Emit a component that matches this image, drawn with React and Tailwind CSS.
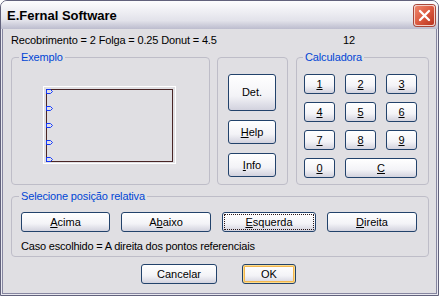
import React from "react";

const Btn = ({ children, className = "", extra = "" }) => (
  <div
    className={`flex items-center justify-center rounded-[3px] border border-[#22426b] bg-linear-to-b from-white via-[#f3f3f7] via-60% to-[#d2d2de] text-[11px] leading-none text-black ${className} ${extra}`}
  >
    {children}
  </div>
);

const Legend = ({ children, ml = "ml-[7px]" }) => (
  <legend className={`${ml} px-[2px] text-[11px] leading-[13px] tracking-[-0.15px] text-[#0046d5]`}>{children}</legend>
);

function Drawing() {
  const ys = [3, 20, 37, 54, 71];
  return (
    <svg width="134" height="79" viewBox="0 0 134 79" className="block">
      <rect x="0.5" y="0.5" width="132" height="77" fill="none" stroke="#ffffff" strokeWidth="1" />
      <rect x="3.5" y="3.5" width="126" height="72" fill="none" stroke="#4a2626" strokeWidth="1" />
      {ys.map((y) => (
        <polyline
          key={y}
          points={`3.5,${y + 0.5} 7.5,${y + 0.5} 9.5,${y + 2.5} 7.5,${y + 4.5} 3.5,${y + 4.5} 3.5,${y + 0.5}`}
          fill="none"
          stroke="#1238ff"
          strokeWidth="1"
        />
      ))}
    </svg>
  );
}

function CloseBtn() {
  return (
    <div className="mt-[4px] flex h-[21px] w-[21px] items-center justify-center rounded-[3px] border border-[#f4d0c8] bg-linear-to-br from-[#ee866c] via-[#dc5a40] to-[#b8321e] shadow-[0_0_0_1px_#a8473a]">
      <svg width="13" height="13" viewBox="0 0 13 13">
        <path d="M2 2 L11 11 M11 2 L2 11" stroke="white" strokeWidth="2.3" strokeLinecap="round" />
      </svg>
    </div>
  );
}

export default function App() {
  return (
    <div className="flex h-[296px] w-[439px] flex-col overflow-hidden rounded-t-[7px] border border-[#62627c] bg-[#e8e8f0] font-['Liberation_Sans',Arial,sans-serif] text-black">
      {/* Title bar */}
      <div className="flex h-[28px] shrink-0 items-start justify-between bg-linear-to-b from-[#fdfdfe] via-[#e2e2ea] via-70% to-[#bcbcce] pl-[6px] pr-[3px]">
        <span className="pt-[8px] text-[13px] font-bold leading-[14px] text-black">E.Fernal Software</span>
        <CloseBtn />
      </div>
      {/* Frame + client */}
      <div className="flex flex-1 flex-col px-[1px] pb-[1px]">
        <div className="flex flex-1 flex-col border-x border-b border-[#8686a0] bg-[#e0dfe3] pl-[8px] pr-[7px] pt-[4px]">
          {/* Info row */}
          <div className="flex h-[14px] text-[11px] leading-[14px] tracking-[-0.15px]">
            <span className="w-[332px]">Recobrimento = 2 Folga = 0.25 Donut = 4.5</span>
            <span>12</span>
          </div>

          {/* Groups row */}
          <div className="mt-[4px] flex items-start">
            <fieldset className="h-[134px] w-[199px] rounded-[4px] border border-[#bebdc8]">
              <Legend>Exemplo</Legend>
              <div className="ml-[31px] mt-[22px]">
                <Drawing />
              </div>
            </fieldset>

            <div className="ml-[7px] mt-[6px] flex h-[128px] w-[71px] flex-col gap-[9px] rounded-[4px] border border-[#bebdc8] pl-[10px] pt-[16px]">
              <Btn className="h-[37px] w-[48px]">Det.</Btn>
              <Btn className="h-[24px] w-[48px]">
                <span><u>H</u>elp</span>
              </Btn>
              <Btn className="h-[24px] w-[48px]">
                <span><u>I</u>nfo</span>
              </Btn>
            </div>

            <fieldset className="ml-[8px] h-[134px] w-[133px] rounded-[4px] border border-[#bebdc8]">
              <Legend ml="ml-[6px]">Calculadora</Legend>
              <div className="ml-[7px] mt-[10px] grid grid-cols-[31px_31px_31px] gap-x-[10px] gap-y-[8px]">
                {["1", "2", "3", "4", "5", "6", "7", "8", "9", "0"].map((n) => (
                  <Btn key={n} className="h-[20px]">
                    <u>{n}</u>
                  </Btn>
                ))}
                <Btn className="col-span-2 h-[20px]">
                  <u>C</u>
                </Btn>
              </div>
            </fieldset>
          </div>

          {/* Selecione */}
          <fieldset className="mt-[5px] h-[67px] w-[418px] rounded-[4px] border border-[#bebdc8]">
            <Legend>Selecione posição relativa</Legend>
            <div className="ml-[9px] mt-[9px] flex gap-[11px]">
              <Btn className="h-[20px] w-[89px]">
                <span><u>A</u>cima</span>
              </Btn>
              <Btn className="h-[20px] w-[90px]">
                <span>A<u>b</u>aixo</span>
              </Btn>
              <Btn className="h-[20px] w-[94px]" extra="outline-1 outline-dotted outline-[#2a1616] outline-offset-[-3px]">
                <span><u>E</u>squerda</span>
              </Btn>
              <Btn className="h-[20px] w-[90px]">
                <span><u>D</u>ireita</span>
              </Btn>
            </div>
            <div className="ml-[9px] mt-[7px] text-[11px] leading-[14px] tracking-[-0.2px]">
              Caso escolhido = A direita dos pontos referenciais
            </div>
          </fieldset>

          {/* Bottom buttons */}
          <div className="mt-[7px] flex gap-[25px] pl-[130px]">
            <Btn className="h-[20px] w-[76px]">Cancelar</Btn>
            <Btn
              className="h-[20px] w-[54px]"
              extra="shadow-[inset_0_0_0_1px_#fbdc8e,inset_0_0_0_2px_#f3b64e]"
            >
              OK
            </Btn>
          </div>
        </div>
      </div>
    </div>
  );
}
